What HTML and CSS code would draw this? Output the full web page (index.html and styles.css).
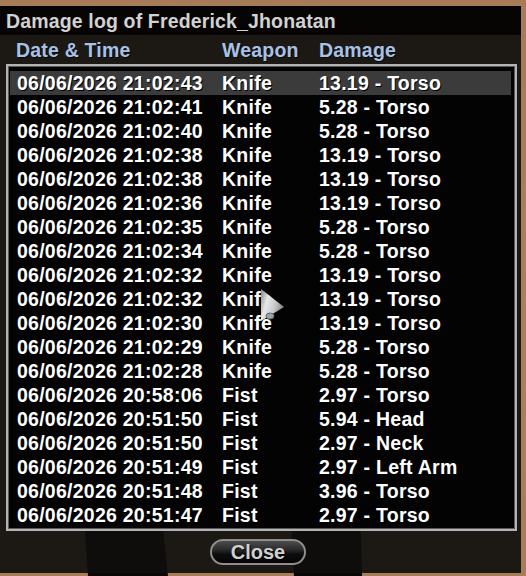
FILE: index.html
```html
<!DOCTYPE html>
<html lang="en">
<head>
<meta charset="utf-8">
<title>Damage log</title>
<link rel="stylesheet" href="styles.css">
</head>
<body>
<div class="scene">
  <svg class="backdrop" width="526" height="576" viewBox="0 0 526 576" aria-hidden="true">
    <polygon points="76,400 150,400 168,576 88,576" fill="#0c0706"/>
    <polygon points="284,400 358,400 362,576 294,576" fill="#0c0706"/>
  </svg>
  <div class="dialog">
    <div class="titlebar">Damage log of Frederick_Jhonatan</div>
    <div class="head cols">
      <span>Date &amp; Time</span><span>Weapon</span><span>Damage</span>
    </div>
    <div class="list">
      <div class="row cols sel"><span>06/06/2026 21:02:43</span><span>Knife</span><span>13.19 - Torso</span></div>
      <div class="row cols"><span>06/06/2026 21:02:41</span><span>Knife</span><span>5.28 - Torso</span></div>
      <div class="row cols"><span>06/06/2026 21:02:40</span><span>Knife</span><span>5.28 - Torso</span></div>
      <div class="row cols"><span>06/06/2026 21:02:38</span><span>Knife</span><span>13.19 - Torso</span></div>
      <div class="row cols"><span>06/06/2026 21:02:38</span><span>Knife</span><span>13.19 - Torso</span></div>
      <div class="row cols"><span>06/06/2026 21:02:36</span><span>Knife</span><span>13.19 - Torso</span></div>
      <div class="row cols"><span>06/06/2026 21:02:35</span><span>Knife</span><span>5.28 - Torso</span></div>
      <div class="row cols"><span>06/06/2026 21:02:34</span><span>Knife</span><span>5.28 - Torso</span></div>
      <div class="row cols"><span>06/06/2026 21:02:32</span><span>Knife</span><span>13.19 - Torso</span></div>
      <div class="row cols"><span>06/06/2026 21:02:32</span><span>Knife</span><span>13.19 - Torso</span></div>
      <div class="row cols"><span>06/06/2026 21:02:30</span><span>Knife</span><span>13.19 - Torso</span></div>
      <div class="row cols"><span>06/06/2026 21:02:29</span><span>Knife</span><span>5.28 - Torso</span></div>
      <div class="row cols"><span>06/06/2026 21:02:28</span><span>Knife</span><span>5.28 - Torso</span></div>
      <div class="row cols"><span>06/06/2026 20:58:06</span><span>Fist</span><span>2.97 - Torso</span></div>
      <div class="row cols"><span>06/06/2026 20:51:50</span><span>Fist</span><span>5.94 - Head</span></div>
      <div class="row cols"><span>06/06/2026 20:51:50</span><span>Fist</span><span>2.97 - Neck</span></div>
      <div class="row cols"><span>06/06/2026 20:51:49</span><span>Fist</span><span>2.97 - Left Arm</span></div>
      <div class="row cols"><span>06/06/2026 20:51:48</span><span>Fist</span><span>3.96 - Torso</span></div>
      <div class="row cols"><span>06/06/2026 20:51:47</span><span>Fist</span><span>2.97 - Torso</span></div>
    </div>
    <div class="actions"><button class="btn" type="button">Close</button></div>
  </div>
  <svg class="cursor" width="26" height="36" viewBox="0 0 26 36" aria-hidden="true">
    <defs>
      <linearGradient id="cg" x1="0" y1="0" x2="1" y2="0.4">
        <stop offset="0" stop-color="#7d8690"/>
        <stop offset="0.35" stop-color="#e8e8e8"/>
        <stop offset="0.7" stop-color="#c8c8c8"/>
        <stop offset="1" stop-color="#8a8a8a"/>
      </linearGradient>
    </defs>
    <polygon points="1,1 24,19 1,33" fill="url(#cg)"/>
    <ellipse cx="10" cy="28" rx="4" ry="3" fill="#9aa4ad" stroke="#5c6670" stroke-width="1"/>
  </svg>
</div>
</body>
</html>
```

FILE: styles.css
```css
html, body {
  margin: 0;
  padding: 0;
}

body {
  width: 526px;
  height: 576px;
  overflow: hidden;
  background: linear-gradient(180deg, #a57c56 0%, #a9805a 60%, #a67d57 100%);
  font-family: "Liberation Sans", Arial, sans-serif;
  font-weight: bold;
  font-size: 19.5px;
  color: #ffffff;
}

.scene {
  position: relative;
  width: 526px;
  height: 576px;
  padding-top: 6px;
  box-sizing: border-box;
}

.backdrop {
  position: absolute;
  left: 0;
  top: 0;
}

.dialog {
  position: relative;
  width: 521px;
  height: 567px;
  background: rgba(14, 14, 13, 0.91);
  display: flex;
  flex-direction: column;
}

.titlebar {
  height: 29px;
  line-height: 30px;
  padding-left: 6px;
  background: rgba(4, 4, 3, 0.93);
  color: #d2d2d2;
  letter-spacing: 0.15px;
  white-space: nowrap;
}

.cols {
  display: grid;
  grid-template-columns: 205px 97px 1fr;
  white-space: nowrap;
}

.head {
  height: 29px;
  line-height: 30px;
  padding-left: 16px;
  grid-template-columns: 206px 97px 1fr;
  color: #a7c2e6;
  letter-spacing: 0.2px;
  text-shadow: 1px 1px 0 rgba(0, 0, 0, 0.6);
}

.list {
  margin-left: 6px;
  width: 511px;
  height: 467px;
  box-sizing: border-box;
  border: 2px solid #b4b4b4;
  box-shadow: inset 0 0 0 1px #5a5a5a;
  background: rgba(3, 3, 3, 0.97);
  padding: 5px 4px 2px 2px;
}

.row {
  height: 24px;
  line-height: 24px;
  padding-left: 7px;
  letter-spacing: 0.25px;
  text-shadow: 1px 1px 0 #000;
}

.row.sel {
  background: #3b3b3b;
}

.actions {
  display: flex;
  justify-content: center;
  padding: 8px 5px 0 0;
}

.btn {
  width: 96px;
  height: 26px;
  box-sizing: border-box;
  border: 2px solid #8e8e8e;
  border-radius: 13px;
  background: linear-gradient(180deg, #4d4d4d 0%, #2a2a2a 40%, #0d0d0d 60%, #050505 100%);
  color: #d0d0d0;
  font-family: "Liberation Sans", Arial, sans-serif;
  font-weight: bold;
  font-size: 20px;
  line-height: 22px;
  padding: 0;
  text-shadow: 1px 1px 0 #000;
}

.cursor {
  position: absolute;
  left: 260px;
  top: 288px;
}
```
